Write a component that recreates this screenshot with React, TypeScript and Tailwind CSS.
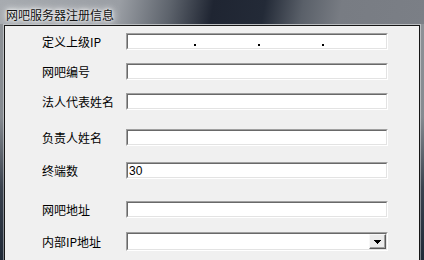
import React from 'react';

const cjk = "font-['SimSun','Noto_Sans_CJK_SC',sans-serif]";

function Sunken({ className = '', children }: { className?: string; children?: React.ReactNode }) {
  return (
    <div className={`w-[262px] border border-[#a0a0a0] border-r-white border-b-white ${className}`}>
      <div className="h-full w-full border border-[#696969] border-r-[#e3e3e3] border-b-[#e3e3e3] bg-white">
        {children}
      </div>
    </div>
  );
}

function Row({ label, mt, children }: { label: string; mt: string; children: React.ReactNode }) {
  return (
    <div className={`flex items-center ${mt}`}>
      <div className={`w-[84px] text-[12px] leading-[14px] text-black ${cjk}`}>{label}</div>
      {children}
    </div>
  );
}

export default function App() {
  return (
    <div className="flex h-[260px] w-[424px] flex-col overflow-hidden bg-[linear-gradient(to_bottom,#8f9398_0%,#858a90_45%,#3a424e_72%,#1f2937_100%)]">
      {/* title bar */}
      <div className="h-[24px] shrink-0 bg-[linear-gradient(100deg,#a7abb0_0%,#9a9ea4_28%,#5d636c_40%,#1f2532_50%,#232a37_62%,#5a6069_71%,#787c83_80%,#7b7f86_100%)] pl-[6px] pt-[2px]">
        <span className={`text-[12px] leading-[16px] text-[#111] [text-shadow:0_0_6px_#fff,0_0_10px_#fff,0_0_3px_#fff] ${cjk}`}>
          网吧服务器注册信息
        </span>
      </div>

      {/* frame */}
      <div className="ml-[3px] flex w-[418px] flex-1 flex-col border border-b-0 border-white/40">
        <div className="flex flex-1 flex-col border border-b-0 border-[#161616] bg-[#f0f0f0] pl-[37px] pt-[7px]">
          <Row label="定义上级IP" mt="">
            <Sunken className="h-[17px]">
              <div className="flex h-full items-end pb-[2px] pl-[4px]">
                <div className="flex-1" />
                <div className="h-[2px] w-[2px] bg-black" />
                <div className="flex-1" />
                <div className="h-[2px] w-[2px] bg-black" />
                <div className="flex-1" />
                <div className="h-[2px] w-[2px] bg-black" />
                <div className="flex-1" />
              </div>
            </Sunken>
          </Row>
          <Row label="网吧编号" mt="mt-[13px]">
            <Sunken className="h-[17px]" />
          </Row>
          <Row label="法人代表姓名" mt="mt-[13px]">
            <Sunken className="h-[17px]" />
          </Row>
          <Row label="负责人姓名" mt="mt-[19px]">
            <Sunken className="h-[17px]" />
          </Row>
          <Row label="终端数" mt="mt-[16px]">
            <Sunken className="h-[17px]">
              <div className="pl-[1px] font-['Liberation_Sans',sans-serif] text-[12px] leading-[15px] text-black">30</div>
            </Sunken>
          </Row>
          <Row label="网吧地址" mt="mt-[22px]">
            <Sunken className="h-[17px]" />
          </Row>
          <Row label="内部IP地址" mt="mt-[14px]">
            <Sunken className="h-[19px]">
              <div className="flex h-full justify-end">
                <div className="flex w-[17px] items-center justify-center border border-[#f8f8f8] border-r-[#5a5a5a] border-b-[#5a5a5a] bg-[#ececec] shadow-[inset_-1px_-1px_0_#a0a0a0]">
                  <svg width="7" height="4" viewBox="0 0 7 4">
                    <path d="M0 0h7v1h-1v1h-1v1h-1v1h-1v-1h-1v-1h-1v-1h-1z" fill="#000" />
                  </svg>
                </div>
              </div>
            </Sunken>
          </Row>
        </div>
      </div>
    </div>
  );
}
